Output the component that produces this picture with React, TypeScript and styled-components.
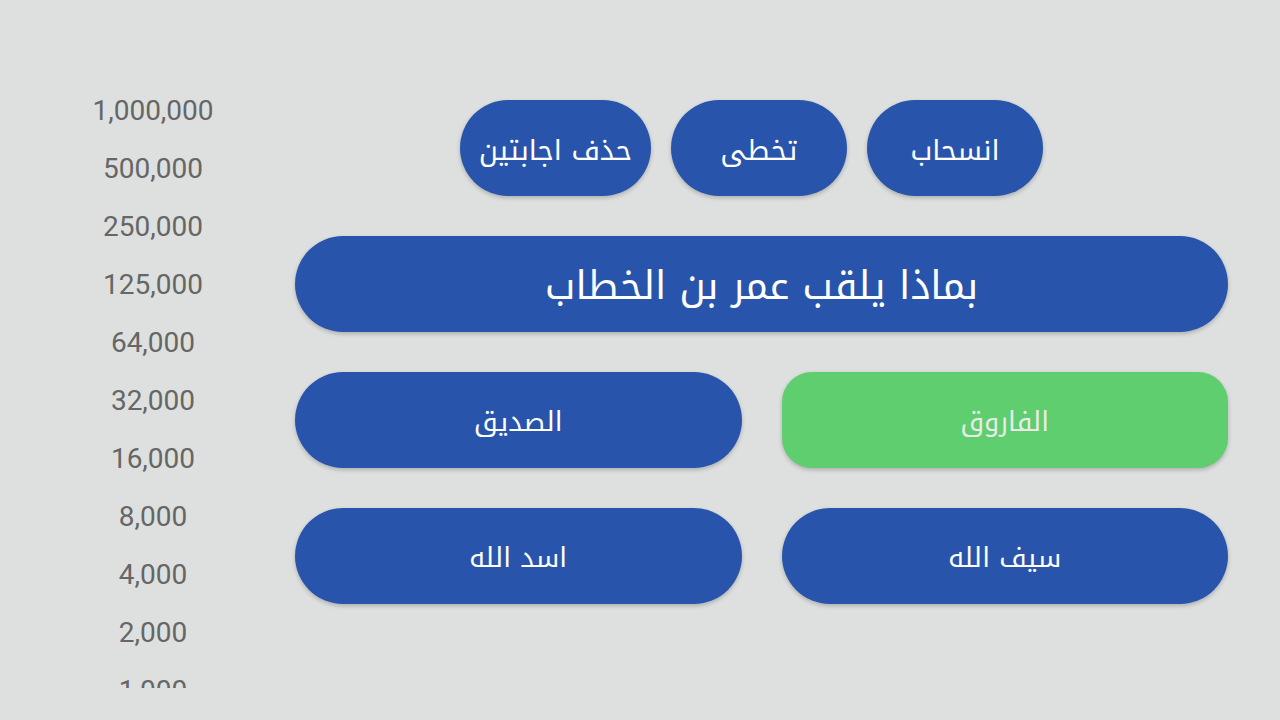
import styled, { createGlobalStyle } from 'styled-components';

const GlobalStyle = createGlobalStyle`
  html, body {
    margin: 0;
    padding: 0;
    background: #dee0df;
  }
  * {
    box-sizing: border-box;
  }
`;

const arabicFont = `"Noto Kufi Arabic", "Droid Arabic Kufi", "Noto Sans Arabic", "DejaVu Sans", sans-serif`;

const Page = styled.div`
  display: flex;
  width: 1280px;
  height: 720px;
  overflow: hidden;
`;

const Ladder = styled.ul`
  list-style: none;
  margin: 82px 0 0 48px;
  padding: 0;
  width: 210px;
  height: 606px;
  overflow: hidden;
  flex-shrink: 0;
`;

const Step = styled.li`
  height: 58px;
  line-height: 58px;
  text-align: center;
  font-family: Roboto, "Liberation Sans", sans-serif;
  font-size: 28px;
  color: #656665;
`;

const Board = styled.main`
  margin: 100px 0 0 37px;
  width: 933px;
  display: flex;
  flex-direction: column;
  gap: 40px;
`;

const Helpers = styled.div`
  display: flex;
  direction: rtl;
  justify-content: center;
  gap: 20px;
  padding-right: 20px;
`;

const Pill = styled.button<{ $width?: number; $size?: number; $green?: boolean }>`
  height: 96px;
  width: ${(p) => (p.$width ? `${p.$width}px` : '100%')};
  border: none;
  border-radius: ${(p) => (p.$green ? '30px' : '48px')};
  background: ${(p) => (p.$green ? '#5ece6e' : '#2855ab')};
  color: ${(p) => (p.$green ? '#e9ebe9' : '#ffffff')};
  font-family: ${arabicFont};
  font-size: ${(p) => p.$size ?? 28}px;
  direction: rtl;
  display: flex;
  align-items: center;
  justify-content: center;
  box-shadow: 0 2px 4px rgba(0, 0, 0, 0.22);
  padding: 4px 12px 0;
  cursor: pointer;
`;

const Answers = styled.div`
  display: grid;
  direction: rtl;
  grid-template-columns: 1fr 1fr;
  column-gap: 40px;
  row-gap: 40px;
`;

const prizes = [
  '1,000,000',
  '500,000',
  '250,000',
  '125,000',
  '64,000',
  '32,000',
  '16,000',
  '8,000',
  '4,000',
  '2,000',
  '1,000',
];

const answers = [
  { text: 'الفاروق', correct: true },
  { text: 'الصديق', correct: false },
  { text: 'سيف الله', correct: false },
  { text: 'اسد الله', correct: false },
];

export default function App() {
  return (
    <>
      <GlobalStyle />
      <Page>
        <Ladder>
          {prizes.map((p) => (
            <Step key={p}>{p}</Step>
          ))}
        </Ladder>
        <Board>
          <Helpers>
            <Pill $width={176}>انسحاب</Pill>
            <Pill $width={176}>تخطى</Pill>
            <Pill $width={191}>حذف اجابتين</Pill>
          </Helpers>
          <Pill $size={39}>بماذا يلقب عمر بن الخطاب</Pill>
          <Answers>
            {answers.map((a) => (
              <Pill key={a.text} $size={27} $green={a.correct}>
                {a.text}
              </Pill>
            ))}
          </Answers>
        </Board>
      </Page>
    </>
  );
}
